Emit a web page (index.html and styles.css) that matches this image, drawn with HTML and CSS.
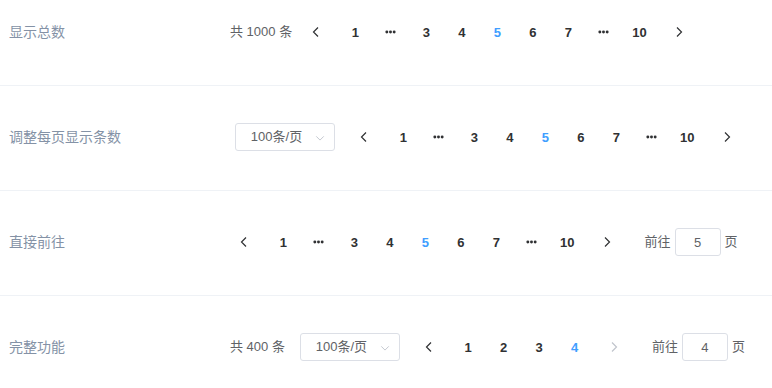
FILE: index.html
```html
<!DOCTYPE html>
<html lang="zh-CN">

<head>
    <meta charset="UTF-8">
    <meta name="viewport" content="width=device-width, initial-scale=1.0">
    <title>分页 - 附加功能</title>
    <link rel="stylesheet" href="styles.css">
</head>

<body>
    <div class="demo-pagination">
        <!-- 显示总数 -->
        <div class="block">
            <span class="demonstration">显示总数</span>
            <div class="pagination">
                <span class="total">共 1000 条</span>
                <button class="btn-prev"><svg viewBox="0 0 12 12"><path d="M8 1.5 3.5 6 8 10.5"/></svg></button>
                <ul class="pager">
                    <li>1</li>
                    <li class="more"><svg viewBox="0 0 12 4"><circle cx="2" cy="2" r="1.6"/><circle cx="6" cy="2" r="1.6"/><circle cx="10" cy="2" r="1.6"/></svg></li>
                    <li>3</li>
                    <li>4</li>
                    <li class="active">5</li>
                    <li>6</li>
                    <li>7</li>
                    <li class="more"><svg viewBox="0 0 12 4"><circle cx="2" cy="2" r="1.6"/><circle cx="6" cy="2" r="1.6"/><circle cx="10" cy="2" r="1.6"/></svg></li>
                    <li>10</li>
                </ul>
                <button class="btn-next"><svg viewBox="0 0 12 12"><path d="M4 1.5 8.5 6 4 10.5"/></svg></button>
            </div>
        </div>

        <!-- 调整每页显示条数 -->
        <div class="block">
            <span class="demonstration">调整每页显示条数</span>
            <div class="pagination">
                <span class="sizes">
                    <span class="select">
                        <span class="select-value">100条/页</span>
                        <svg class="select-arrow" viewBox="0 0 12 12"><path d="M1.5 4 6 8.5 10.5 4"/></svg>
                    </span>
                </span>
                <button class="btn-prev"><svg viewBox="0 0 12 12"><path d="M8 1.5 3.5 6 8 10.5"/></svg></button>
                <ul class="pager">
                    <li>1</li>
                    <li class="more"><svg viewBox="0 0 12 4"><circle cx="2" cy="2" r="1.6"/><circle cx="6" cy="2" r="1.6"/><circle cx="10" cy="2" r="1.6"/></svg></li>
                    <li>3</li>
                    <li>4</li>
                    <li class="active">5</li>
                    <li>6</li>
                    <li>7</li>
                    <li class="more"><svg viewBox="0 0 12 4"><circle cx="2" cy="2" r="1.6"/><circle cx="6" cy="2" r="1.6"/><circle cx="10" cy="2" r="1.6"/></svg></li>
                    <li>10</li>
                </ul>
                <button class="btn-next"><svg viewBox="0 0 12 12"><path d="M4 1.5 8.5 6 4 10.5"/></svg></button>
            </div>
        </div>

        <!-- 直接前往 -->
        <div class="block">
            <span class="demonstration">直接前往</span>
            <div class="pagination">
                <button class="btn-prev"><svg viewBox="0 0 12 12"><path d="M8 1.5 3.5 6 8 10.5"/></svg></button>
                <ul class="pager">
                    <li>1</li>
                    <li class="more"><svg viewBox="0 0 12 4"><circle cx="2" cy="2" r="1.6"/><circle cx="6" cy="2" r="1.6"/><circle cx="10" cy="2" r="1.6"/></svg></li>
                    <li>3</li>
                    <li>4</li>
                    <li class="active">5</li>
                    <li>6</li>
                    <li>7</li>
                    <li class="more"><svg viewBox="0 0 12 4"><circle cx="2" cy="2" r="1.6"/><circle cx="6" cy="2" r="1.6"/><circle cx="10" cy="2" r="1.6"/></svg></li>
                    <li>10</li>
                </ul>
                <button class="btn-next"><svg viewBox="0 0 12 12"><path d="M4 1.5 8.5 6 4 10.5"/></svg></button>
                <span class="jump">前往<span class="editor"><input type="text" value="5"></span>页</span>
            </div>
        </div>

        <!-- 完整功能 -->
        <div class="block">
            <span class="demonstration">完整功能</span>
            <div class="pagination">
                <span class="total">共 400 条</span>
                <span class="sizes">
                    <span class="select">
                        <span class="select-value">100条/页</span>
                        <svg class="select-arrow" viewBox="0 0 12 12"><path d="M1.5 4 6 8.5 10.5 4"/></svg>
                    </span>
                </span>
                <button class="btn-prev"><svg viewBox="0 0 12 12"><path d="M8 1.5 3.5 6 8 10.5"/></svg></button>
                <ul class="pager">
                    <li>1</li>
                    <li>2</li>
                    <li>3</li>
                    <li class="active">4</li>
                </ul>
                <button class="btn-next" disabled><svg viewBox="0 0 12 12"><path d="M4 1.5 8.5 6 4 10.5"/></svg></button>
                <span class="jump">前往<span class="editor"><input type="text" value="4"></span>页</span>
            </div>
        </div>
    </div>
</body>

</html>
```

FILE: styles.css
```css
:root {
    --primary: #409EFF;
    --text: #303133;
    --regular: #606266;
    --placeholder: #C0C4CC;
    --border: #DCDFE6;
    --divider: #EFF2F6;
    --label: #8492A6;
}

* {
    box-sizing: border-box;
    margin: 0;
    padding: 0;
}

body {
    font-family: 'Liberation Sans', 'Noto Sans CJK SC', sans-serif;
    background: #fff;
    color: var(--text);
    overflow: hidden;
}

.block {
    display: flex;
    align-items: flex-start;
    padding: 30px 0 30px 9px;
    border-bottom: 1px solid var(--divider);
}

/* the first block is scrolled partly out of view */
.block:first-child {
    padding-top: 11px;
}

.demonstration {
    flex: none;
    width: 216px;
    font-size: 14px;
    line-height: 42px;
    height: 44px;
    color: var(--label);
}

.pagination {
    display: flex;
    align-items: center;
    margin-top: 5px;
    padding: 2px 5px;
    white-space: nowrap;
    font-size: 13px;
    font-weight: 700;
    color: var(--text);
}

.total {
    margin-right: 10px;
    font-weight: 400;
    color: var(--regular);
    line-height: 28px;
}

.sizes {
    margin-right: 10px;
}

.select {
    position: relative;
    display: block;
    width: 100px;
    height: 28px;
    margin: 0 5px;
    border: 1px solid var(--border);
    border-radius: 3px;
    padding: 0 25px 0 8px;
    text-align: center;
    font-weight: 400;
    color: var(--regular);
    line-height: 26px;
}

.select-arrow {
    position: absolute;
    right: 9px;
    top: 9px;
    width: 10px;
    height: 10px;
    fill: none;
    stroke: var(--placeholder);
    stroke-width: 1.1;
}

.btn-prev,
.btn-next {
    display: flex;
    align-items: center;
    justify-content: center;
    width: 35.5px;
    height: 28px;
    border: none;
    background: transparent;
    color: var(--text);
    cursor: pointer;
}

.btn-prev {
    padding-right: 8px;
}

.btn-next {
    padding-left: 8px;
}

.btn-prev svg,
.btn-next svg {
    width: 12px;
    height: 12px;
    fill: none;
    stroke: currentColor;
    stroke-width: 1.2;
}

.btn-next:disabled {
    color: var(--placeholder);
    cursor: not-allowed;
}

.pager {
    display: flex;
    list-style: none;
}

.pager li {
    display: flex;
    align-items: center;
    justify-content: center;
    width: 35.5px;
    height: 28px;
    padding: 0 4px;
    cursor: pointer;
}

.pager li.active {
    color: var(--primary);
}

.pager li.more svg {
    width: 11px;
    height: 4px;
    fill: var(--text);
}

.jump {
    display: flex;
    align-items: center;
    margin-left: 24px;
    font-weight: 400;
    color: var(--regular);
    line-height: 28px;
}

.editor {
    display: block;
    width: 50px;
    margin: 0 2px;
    padding: 0 2px;
}

.editor input {
    display: block;
    width: 100%;
    height: 28px;
    border: 1px solid var(--border);
    border-radius: 3px;
    text-align: center;
    font-family: inherit;
    font-size: 13px;
    color: var(--regular);
    outline: none;
}

.editor input:focus {
    border-color: var(--primary);
}
```
